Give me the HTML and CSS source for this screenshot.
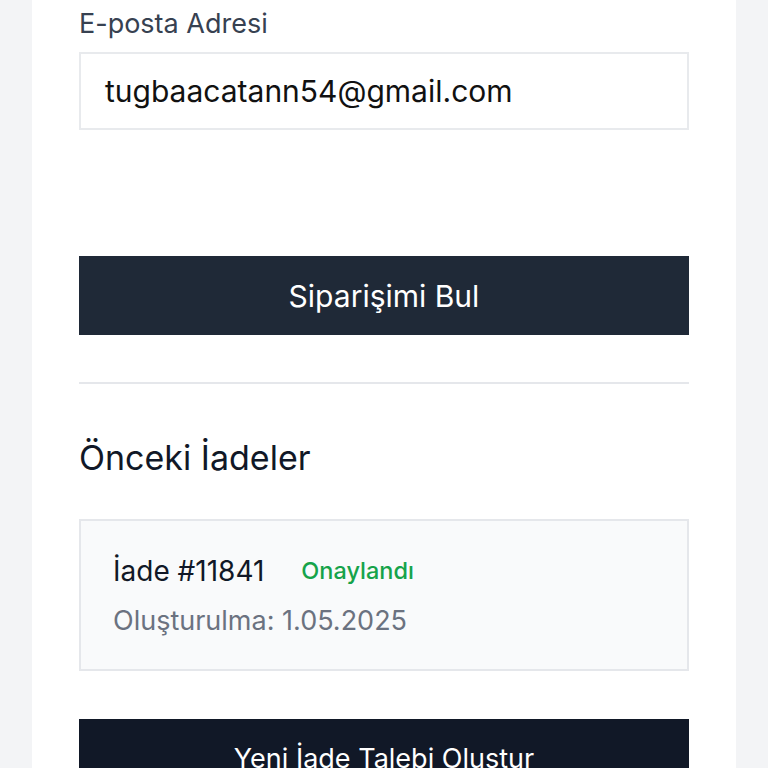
FILE: index.html
```html
<!DOCTYPE html>
<html lang="tr">
<head>
<meta charset="utf-8">
<title>İade</title>
<link rel="stylesheet" href="styles.css">
</head>
<body>
<div class="page">
  <div class="field">
    <label class="label">E-posta Adresi</label>
    <div class="input">tugbaacatann54@gmail.com</div>
  </div>
  <button class="btn btn-primary">Siparişimi Bul</button>
  <hr class="divider">
  <h2 class="heading">Önceki İadeler</h2>
  <div class="return-card">
    <div class="return-row">
      <span class="return-id">İade #11841</span>
      <span class="status">Onaylandı</span>
    </div>
    <div class="return-date">Oluşturulma: 1.05.2025</div>
  </div>
  <button class="btn btn-dark">Yeni İade Talebi Oluştur</button>
</div>
</body>
</html>
```

FILE: styles.css
```css
html, body {
  margin: 0;
  padding: 0;
  background: #f3f4f6;
  font-family: Inter, "Noto Sans", "Liberation Sans", sans-serif;
  overflow: hidden;
}
.page {
  margin: 0 32px;
  background: #ffffff;
  padding: 7px 47px 40px;
  min-height: 100vh;
  box-sizing: border-box;
  display: flex;
  flex-direction: column;
}
.field {
  display: flex;
  flex-direction: column;
  gap: 12px;
}
.label {
  font-size: 27px;
  line-height: 33px;
  color: #374151;
}
.input {
  height: 78px;
  box-sizing: border-box;
  border: 2px solid #e8eaed;
  padding: 0 24px;
  display: flex;
  align-items: center;
  font-size: 30px;
  color: #111111;
}
.btn {
  height: 79px;
  border: none;
  border-radius: 0;
  color: #ffffff;
  font-family: inherit;
  font-size: 30px;
  width: 100%;
  flex-shrink: 0;
}
.btn-primary {
  margin-top: 126px;
  background: #1f2937;
}
.divider {
  margin: 47px 0 0;
  border: none;
  height: 2px;
  background: #e5e7eb;
}
.heading {
  margin: 54px 0 0;
  font-size: 34px;
  line-height: 40px;
  font-weight: 400;
  color: #111827;
}
.return-card {
  margin-top: 41px;
  height: 152px;
  box-sizing: border-box;
  background: #f9fafb;
  border: 2px solid #e5e7eb;
  padding: 32px 32px 30px;
  display: flex;
  flex-direction: column;
  gap: 14px;
}
.return-row {
  display: flex;
  align-items: center;
  gap: 37px;
  line-height: 36px;
}
.return-id {
  font-size: 28px;
  color: #111827;
}
.status {
  font-size: 23.5px;
  font-weight: 500;
  color: #16a34a;
}
.return-date {
  font-size: 27px;
  line-height: 36px;
  color: #6b7280;
}
.btn-dark {
  margin-top: 48px;
  background: #111827;
  font-size: 27px;
}
```
